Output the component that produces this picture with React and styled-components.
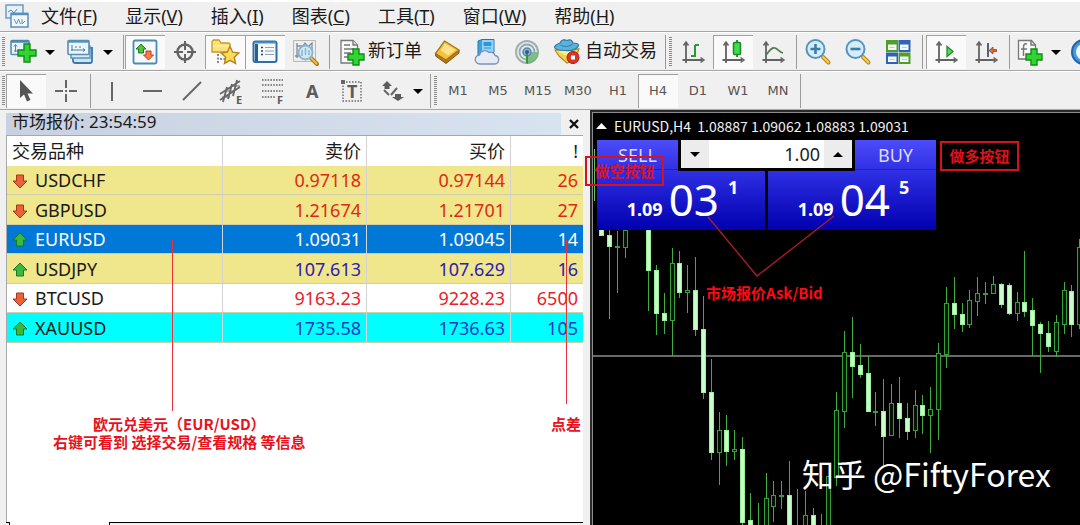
import React from "react";
import styled, { createGlobalStyle, css } from "styled-components";

const GlobalStyle = createGlobalStyle`
  * {
    box-sizing: border-box;
  }

  body {
    margin: 0;
    background-color: #f0f0f0;
    color: #1a1a1a;
    font-family: "Noto Sans", "Noto Sans CJK SC", sans-serif;
    font-size: 18px;
  }

  button, input {
    margin: 0;
    padding: 0;
    border: 0;
    background: none;
    color: inherit;
    font: inherit;
  }
`;

const Window = styled.div`
  display: flex;
  flex-direction: column;
  height: 100vh;
  overflow: hidden;
`;

const MenuBar = styled.nav`
  display: flex;
  flex: none;
  align-items: center;
  gap: 28px;
  height: 32px;
  padding: 0 0 2px 5px;
  border-top: 2px solid #fff;
  border-bottom: 1px solid #a6a6a6;
`;

const MenuLogo = styled.svg`
  flex: none;
  width: 24px;
  height: 24px;
  margin-right: -16px;
`;

const MenuItem = styled.button`
  line-height: 26px;
  white-space: nowrap;
`;

const Toolbar = styled.div`
  display: flex;
  flex: none;
  align-items: stretch;
  height: 39px;
  padding: 2px 0 1px 2px;
  overflow: hidden;
  border-top: 1px solid #fff;
  border-bottom: 1px solid #a6a6a6;
`;

const Grip = styled.div`
  flex: none;
  width: 3px;
  margin: 2px 1px 2px 0;
  background: repeating-linear-gradient(#8a8a8a 0 1px, #f0f0f0 1px 2px);
`;

const Separator = styled.div`
  flex: none;
  width: 1px;
  margin: 0 ${(p) => p.$right || 3}px 0 ${(p) => p.$left || 3}px;
  background-color: #9a9a9a;
`;

const pressed = css`
  background-color: #fafafa;
  box-shadow: inset 1px 1px 0 #a0a0a0;
`;

const ToolButton = styled.button`
  display: flex;
  flex: none;
  align-items: center;
  justify-content: center;
  gap: ${(p) => p.$gap || 2}px;
  width: ${(p) => p.$width || 40}px;
  line-height: 24px;
  white-space: nowrap;
  ${(p) => p.$pressed && pressed}

  svg {
    flex: none;
    width: 28px;
    height: 28px;
    overflow: visible;
  }
`;

const ButtonText = styled.span`
  padding-bottom: 4px;
`;

const TimeButton = styled(ToolButton)`
  color: #555;
  font-family: "DejaVu Sans", sans-serif;
  font-size: 13px;
`;

const Caret = styled.button`
  display: flex;
  flex: none;
  align-items: center;
  justify-content: center;
  width: ${(p) => p.$width || 20}px;

  &::after {
    content: "";
    border: 5px solid transparent;
    border-top-color: #000;
    border-bottom: 0;
  }
`;

const Workspace = styled.main`
  display: grid;
  flex: 1;
  grid-template-columns: 590px 1fr;
  min-height: 0;
`;

/* market watch */

const MarketPanel = styled.section`
  position: relative;
  display: flex;
  flex-direction: column;
  padding: 3px 7px 0 6px;
`;

const PanelTitle = styled.header`
  display: flex;
  flex: none;
  align-items: flex-start;
  height: 22px;
  padding-left: 6px;
  background: linear-gradient(90deg, #c8d1df, #d9e4f1);
  font-size: 17px;
  line-height: 18px;
`;

const CloseButton = styled.button`
  display: flex;
  align-items: center;
  justify-content: center;
  width: 22px;
  height: 22px;
  margin-left: auto;
  padding-left: 3px;
  background-color: #f0f0f0;
`;

const PanelBody = styled.div`
  flex: 1;
  border-top: 1px solid #a8a8a8;
  border-left: 1px solid #a8a8a8;
  background-color: #fff;
`;

const QuoteTable = styled.table`
  width: 100%;
  border-collapse: separate;
  border-spacing: 0;
  table-layout: fixed;

  th, td {
    padding: 0 5px;
    border-right: 1px solid #d4d4d4;
    text-align: right;
    font-weight: 400;
    line-height: 24px;
    white-space: nowrap;
  }

  th:first-child, td:first-child {
    text-align: left;
  }

  th:last-child, td:last-child {
    border-right: 0;
  }

  th {
    height: 30px;
  }
`;

const QuoteRow = styled.tr`
  background-color: ${(p) => p.$bg};
  color: ${(p) => p.$color};

  td {
    height: 29px;
    border-bottom: 1px solid #d0cda8;
  }

  &:nth-child(even) td {
    height: 30px;
  }

  td:first-child {
    color: ${(p) => (p.$selected ? "#fff" : "#1a1a1a")};
  }
`;

const SymbolName = styled.div`
  display: flex;
  align-items: center;
  gap: 7px;

  svg {
    width: 16px;
    height: 16px;
    margin-top: 2px;
  }
`;

const TabStrip = styled.div`
  display: flex;
  flex: none;
  height: 3px;

  &::before {
    content: "";
    width: 3px;
    border-top: 1px solid #000;
    border-right: 1px solid #000;
  }

  &::after {
    content: "";
    flex: 1;
    border-top: 1px solid #000;
    border-left: 1px solid #000;
  }
`;

const ActiveTab = styled.div`
  width: 99px;
  background-color: #fff;
`;

/* red notes over the panels */

const Note = styled.div`
  position: absolute;
  color: #e8111c;
  font-family: "Noto Sans CJK SC", sans-serif;
  font-size: 15px;
  font-weight: 700;
  line-height: 18px;
  text-align: center;
  white-space: nowrap;
`;

const PairNote = styled(Note)`
  top: 305px;
  left: 53px;
`;

const SpreadNote = styled(Note)`
  top: 305px;
  right: 9px;
`;

const PointerLine = styled.div`
  position: absolute;
  top: 130px;
  left: ${(p) => p.$left}px;
  width: 1px;
  height: ${(p) => p.$height}px;
  background-color: #e8323c;
`;

const AskBidNote = styled(Note)`
  top: 171px;
  left: 113px;
  color: #ff0a14;
`;

const BoxNote = styled(Note)`
  top: ${(p) => p.$top}px;
  left: ${(p) => p.$left}px;
  width: 79px;
  padding: 4px 0;
  border: 2px solid #d8121c;
  color: #e0101c;
  pointer-events: none;
`;

const PointerLines = styled.svg`
  position: absolute;
  top: 102px;
  left: 113px;
  width: 130px;
  height: 64px;
  pointer-events: none;
`;

/* chart */

const ChartFrame = styled.section`
  display: flex;
  border: 2px solid #2a2a2a;
  border-right: 0;
  border-bottom: 0;
`;

const ChartPane = styled.div`
  position: relative;
  flex: 1;
  border-top: 1px solid #8c8c8c;
  border-left: 1px solid #8c8c8c;
  background-color: #000;
`;

const CandleChart = styled.svg`
  position: absolute;
  inset: 0;
  width: 100%;
  height: 100%;
`;

const ChartTitle = styled.div`
  position: relative;
  display: flex;
  align-items: center;
  gap: 7px;
  height: 27px;
  padding: 0 0 2px 3px;
  color: #f2f2f2;
  font-family: "Noto Sans CJK SC", sans-serif;
  font-size: 14px;
  line-height: 20px;
  white-space: pre;
`;

const TradePanel = styled.div`
  position: relative;
  display: grid;
  grid-template-columns: 168px 168px;
  gap: 3px;
  margin-left: 4px;
  width: max-content;
`;

const TradeButton = styled.button`
  display: flex;
  flex-direction: column;
  align-items: ${(p) => (p.$side === "buy" ? "flex-end" : "flex-start")};
  height: 90px;
  background: linear-gradient(#4c4cfa, #2b2be0 40%, #0000ae);
  color: #fff;
`;

const TradeLabel = styled.span`
  width: 81px;
  height: 30px;
  border-bottom: 1px solid #2020a8;
  color: #dcdcff;
  line-height: 30px;
  text-align: center;
`;

const Price = styled.span`
  display: flex;
  align-items: baseline;
  align-self: stretch;
  justify-content: center;
  gap: 6px;
  padding-left: 3px;
  font-weight: 700;
  line-height: 58px;
`;

const BigDigits = styled.span`
  font-size: 44px;
  font-weight: 400;
`;

const Pip = styled.sup`
  align-self: flex-start;
  padding-left: 3px;
  font-size: 18px;
  line-height: 34px;
`;

const VolumeBox = styled.div`
  position: absolute;
  top: 0;
  left: 81px;
  display: flex;
  width: 177px;
  height: 31px;
  padding: 0 3px 3px;
  background-color: #000;
`;

const VolumeStep = styled.button`
  display: flex;
  align-items: center;
  justify-content: center;
  width: 28px;
  background-color: #ececec;

  &::after {
    content: "";
    border: 5px solid transparent;
    ${(p) =>
      p.$up
        ? "border-bottom-color: #000; border-top: 0;"
        : "border-top-color: #000; border-bottom: 0;"}
  }
`;

const VolumeInput = styled.input`
  flex: 1;
  min-width: 0;
  padding-right: 4px;
  background-color: #fff;
  color: #222;
  text-align: right;
`;

const Watermark = styled.div`
  position: absolute;
  right: 29px;
  bottom: 28px;
  color: #fff;
  font-family: "Noto Sans CJK SC", sans-serif;
  font-size: 32px;
  line-height: 48px;
  white-space: nowrap;
`;

/* icons */

const Plus = ({ x, y, r = 9 }) => {
  const t = Math.round(r / 3);
  return (
    <path
      d={`M${x - t} ${y - r}h${2 * t}v${r - t}h${r - t}v${2 * t}h${t - r}v${r - t}h${-2 * t}v${t - r}h${t - r}v${-2 * t}h${r - t}z`}
      fill="#2fd62f"
      stroke="#138a1b"
      strokeWidth="1.4"
    />
  );
};

const NewChartIcon = () => (
  <svg viewBox="0 0 28 28">
    <rect x="2" y="2.5" width="18" height="14" rx="1" fill="#e6f3fc" stroke="#5590b8" strokeWidth="1.6" />
    <path d="M2 3.5h18" stroke="#4b86b0" strokeWidth="2.4" />
    <path d="M6.500 7v7M5 8.500l1.500-2 1.500 2M5 13h6" stroke="#5d86a3" fill="none" />
    <Plus x={18} y={15} />
  </svg>
);

const ProfilesIcon = () => (
  <svg viewBox="0 0 28 28">
    <path d="M7 10h19v13a2 2 0 0 1-2 2H9a2 2 0 0 1-2-2z" fill="#cfe3f2" stroke="#3f78a5" strokeWidth="1.8" />
    <path d="M5 8h19v12H5z" fill="#d9ebf7" stroke="#5e93b9" strokeWidth="1.4" />
    <rect x="2" y="2.500" width="21" height="14" rx="1" fill="#eaf5fc" stroke="#5590b8" strokeWidth="1.6" />
    <path d="M2 3.500h21" stroke="#5590b8" strokeWidth="2.400" />
    <path d="M6 7v6M5 12h14M17 10.500l2 1.500-2 1.500M9 9h2M13 9h2" stroke="#4f7c9d" fill="none" />
  </svg>
);

const MarketIcon = () => (
  <svg viewBox="0 0 28 28">
    <rect x="2.500" y="2.500" width="23" height="23" rx="1.500" fill="#f3f9fd" stroke="#4a8ab3" strokeWidth="1.800" />
    <path d="M10 6l5 5h-2.500v4h-5v-4H5z" fill="#4fc23a" stroke="#1c7d1c" />
    <path d="M17.500 22l-5-5H15v-4h5v4h2.500z" fill="#f57a4d" stroke="#c53a14" />
  </svg>
);

const DataWindowIcon = () => (
  <svg viewBox="0 0 28 28" stroke="#636363" fill="none">
    <circle cx="14" cy="14" r="7.500" strokeWidth="2.400" />
    <path d="M14 3v9M14 16v9M3 14h9M16 14h9" strokeWidth="2" />
  </svg>
);

const NavigatorIcon = () => (
  <svg viewBox="0 0 28 28">
    <path d="M1 14V3.500L2.500 2H8l2 3h8l1 1v8z" fill="#f9e27a" stroke="#c79a25" strokeWidth="1.300" />
    <path d="M2 8h16" stroke="#fff3b5" />
    <path d="M7 16v10M9 21h5" stroke="#666" strokeDasharray="2 1.500" strokeWidth="1.500" />
    <path d="M19 8.500l2.700 5.700 6.100.8-4.500 4.200 1.200 6.100-5.500-3-5.500 3 1.200-6.100-4.500-4.200 6.100-.8z" fill="#fbdc58" stroke="#b5821d" strokeWidth="1.400" />
  </svg>
);

const TerminalIcon = () => (
  <svg viewBox="0 0 28 28">
    <rect x="2.500" y="3.500" width="23" height="20.500" rx="2" fill="#f6fafd" stroke="#2e6ea8" strokeWidth="2" />
    <path d="M3 4.500h22" stroke="#4d8cc2" strokeWidth="2" />
    <path d="M5.500 6v17" stroke="#285f92" strokeWidth="3" />
    <path d="M10 9.500h2M10 13h2M10 16.500h2" stroke="#23435e" strokeWidth="1.500" />
    <path d="M14 9.500h9M14 13h9M14 16.500h9" stroke="#8da4b7" />
  </svg>
);

const TesterIcon = () => (
  <svg viewBox="0 0 28 28">
    <path d="M2.500 2.500h22v21h-22z" fill="#eee" stroke="#b8b8b8" />
    <path d="M6 5v15M6 8h6l2-3 3 4 4-4v7M4 18h6" stroke="#7d8d99" fill="none" strokeWidth="1.300" />
    <path d="M20 20l6 6" stroke="#a87812" strokeWidth="4" strokeLinecap="round" />
    <path d="M20 20l5.500 5.500" stroke="#efbd3c" strokeWidth="2" strokeLinecap="round" />
    <circle cx="14.500" cy="14.500" r="7" fill="#c8e6f8" fillOpacity="0.850" stroke="#8db3cc" strokeWidth="1.800" />
    <path d="M11 12v6M14.500 10v7M18 12v5" stroke="#8ab6d1" strokeWidth="1.500" />
  </svg>
);

const NewOrderIcon = () => (
  <svg viewBox="0 0 28 28">
    <path d="M3 2.500h12l4.500 4.500v18H3z" fill="#f8f8f8" stroke="#777" strokeWidth="1.300" />
    <path d="M15 2.500V7h4.500" fill="#ddd" stroke="#777" strokeWidth="1.300" />
    <path d="M6 7h6M6 11h10M6 15h7M6 19h5" stroke="#777" strokeWidth="1.600" />
    <Plus x={18} y={19} r={8} />
  </svg>
);

const EditorIcon = () => (
  <svg viewBox="0 0 28 28">
    <path d="M2.500 15v3L13 25.500 26 15v-3L14 19z" fill="#b97a13" stroke="#8a5a0c" />
    <path d="M11.500 3L26 12 13 22 2.500 15.500z" fill="#f4c243" stroke="#a8720f" strokeWidth="1.300" />
    <path d="M12 5.500l10.500 6.500L15 17.500 8 12z" fill="#fde48a" />
    <path d="M13 22v3" stroke="#9b650d" fill="none" />
  </svg>
);

const CloudIcon = () => (
  <svg viewBox="0 0 28 28">
    <path d="M5 3l4-1.500h12V14l-3 3H5z" fill="#3da2e0" stroke="#1d78b8" />
    <path d="M9 2h11.500v12H9z" fill="#8fd3f7" />
    <path d="M11 4.500h7v3h-7zM11 10h7" fill="#2f95d6" stroke="#2f95d6" />
    <path d="M7 26a4.500 4.500 0 0 1-.5-9 5.500 5.500 0 0 1 9.500-2.500 4.500 4.500 0 0 1 6 3A4.300 4.300 0 0 1 22 26z" fill="#e4ebf6" stroke="#7d91b8" strokeWidth="1.300" />
  </svg>
);

const SignalIcon = () => (
  <svg viewBox="0 0 28 28" fill="none">
    <circle cx="14" cy="14" r="11" fill="#e6ecec" stroke="#a0b0ae" strokeWidth="2" />
    <path d="M14 14h11.500a11.500 11.500 0 0 1-11.500 11.500z" fill="#63bd5c" fillOpacity="0.800" />
    <circle cx="14" cy="14" r="7.500" stroke="#8faab0" strokeWidth="1.800" />
    <circle cx="14" cy="14" r="4" fill="#8fb7d4" stroke="#5a83ab" strokeWidth="1.500" />
    <path d="M14 14v11.500" stroke="#2d9b37" strokeWidth="2" />
    <circle cx="14" cy="14" r="2" fill="#2d5f93" />
  </svg>
);

const AutoTradeIcon = () => (
  <svg viewBox="0 0 28 28">
    <path d="M2 12l4 6 8 7 8-3 4-11z" fill="#f6d34d" stroke="#b98c1c" strokeWidth="1.200" />
    <path d="M4 13l10 5 9-5" fill="#fdeb94" />
    <path d="M1.500 9c1-3 4-3 5.500-4C8.500 1 12 1.500 14 2.500 17 1 19 2 20 5c2 0 5.500 0 5.500 2.500C24 11.500 18 13 12 12.500 6 12.500 2 12 1.500 9z" fill="#5db2dc" stroke="#2b7ba8" strokeWidth="1.200" />
    <path d="M7.500 7c3 2 9 2 12-1" stroke="#2b7ba8" fill="none" />
    <circle cx="20" cy="19.500" r="6" fill="#df3426" stroke="#a31a12" />
    <rect x="18" y="17.500" width="4" height="4" fill="#fff" />
  </svg>
);

const Axes = ({ children }) => (
  <svg viewBox="0 0 28 28" fill="none" stroke="#626262" strokeWidth="1.800">
    <path d="M7 5v20M3.500 22h20" />
    <path d="M4.500 7.500L7 4l2.500 3.500M21.500 19.500L25 22l-3.500 2.500" strokeWidth="1.500" />
    {children}
  </svg>
);

const BarChartIcon = () => (
  <Axes>
    <path d="M16 19V7M16 7h4M12 18h4" stroke="#259b35" strokeWidth="2" />
  </Axes>
);

const CandleIcon = () => (
  <Axes>
    <path d="M18 2v17" stroke="#178a28" strokeWidth="1.800" />
    <rect x="14.500" y="4.500" width="7" height="12" rx="1" fill="#3fdc4c" stroke="#178a28" strokeWidth="1.500" />
  </Axes>
);

const LineChartIcon = () => (
  <Axes>
    <path d="M7 17c4-5 6-8 9-7s4 4 8 5" stroke="#4f7c56" />
  </Axes>
);

const ZoomIcon = ({ plus }) => (
  <svg viewBox="0 0 28 28">
    <path d="M19 19l5.500 5.500" stroke="#b1821a" strokeWidth="4" strokeLinecap="round" />
    <path d="M19 19l5.500 5.500" stroke="#f6cf53" strokeWidth="2" strokeLinecap="round" />
    <circle cx="11.500" cy="11" r="9" fill="#d5edfa" stroke="#5495bf" strokeWidth="2" />
    <path d={plus ? "M6.500 11h10M11.500 6v10" : "M6.500 11h10"} stroke="#3b7da8" strokeWidth="2.600" />
  </svg>
);

const TileIcon = () => (
  <svg viewBox="0 0 28 28">
    <path d="M2 2h12v12H2zM14.500 14.500h12v11.500h-12z" fill="#4f9f27" />
    <path d="M14.500 2h12v12h-12zM2 14.500h12V26H2z" fill="#2d63b8" />
    <path d="M4 6.500h8.500v5.500H4zM16 6.500h8.500v5.500H16zM4 18.500h8.500V24H4zM16 18.500h8.500V24H16z" fill="#f4f8f8" />
    <path d="M5.500 9.500h5M18 9.500h5M5.500 21.500h5M18 21.500h5" stroke="#b9cbd2" />
  </svg>
);

const AutoScrollIcon = () => (
  <Axes>
    <path d="M15 8.500v10l6-5z" fill="#5fd25f" stroke="#228c2e" strokeWidth="1.300" />
  </Axes>
);

const ShiftIcon = () => (
  <Axes>
    <path d="M16 5v14" stroke="#496680" strokeWidth="2" />
    <path d="M17 12.500l4-3.500v2.500h3.500v2H21V16z" fill="#e06a35" stroke="#98401d" strokeWidth="0.800" />
  </Axes>
);

const IndicatorIcon = () => (
  <svg viewBox="0 0 28 28">
    <path d="M2.500 2.500h13l4 4.500v14h-17z" fill="#fafafa" stroke="#777" strokeWidth="1.300" />
    <path d="M15 2.500V7h4.500M11 6c-3-1-3.500 1-3.500 4v8M5 11h6" fill="none" stroke="#777" strokeWidth="1.500" />
    <Plus x={18} y={19} r={8} />
  </svg>
);

const ClockIcon = () => (
  <svg viewBox="0 0 28 28">
    <circle cx="14" cy="14" r="12" fill="#4a98dc" stroke="#1c66ac" strokeWidth="2" />
    <circle cx="14" cy="14" r="8" fill="#eef6fc" />
  </svg>
);

const DrawIcon = ({ children, width = 2 }) => (
  <svg viewBox="0 0 28 28" fill="none" stroke="#666" strokeWidth={width}>
    {children}
  </svg>
);

const LetterMark = styled.text`
  fill: #5c5c5c;
  stroke: none;
  font-family: "Noto Sans", sans-serif;
  font-size: ${(p) => p.$size}px;
  font-weight: 700;
`;

const CursorIcon = () => (
  <svg viewBox="0 0 28 28">
    <path d="M8 3v18l4-3.500 3 7 3.500-1.500-3-6.500H21z" fill="#555" />
  </svg>
);

const CrossIcon = () => (
  <DrawIcon>
    <path d="M14 3v8M14 17v8M3 14h8M17 14h8" />
    <path d="M13 14h2" />
  </DrawIcon>
);

const ChannelIcon = () => (
  <DrawIcon width={1.8}>
    <path d="M2 17L22 4M2 23L22 10M5 25L9 10M10 22l4-15M15 19l4-16" />
    <path d="M4 20h8M8 14h9M13 9h9" strokeWidth="1.200" />
    <LetterMark x="18" y="27" $size={11}>E</LetterMark>
  </DrawIcon>
);

const FiboIcon = () => (
  <DrawIcon width={1.600}>
    <path d="M4 3h21M4 8h21M4 14h21M4 20h13" strokeDasharray="1.600 1.200" />
    <LetterMark x="19" y="27" $size={11}>F</LetterMark>
  </DrawIcon>
);

const TextIcon = () => (
  <DrawIcon>
    <LetterMark x="8" y="21" $size={18}>A</LetterMark>
  </DrawIcon>
);

const LabelIcon = () => (
  <DrawIcon width={1.400}>
    <rect x="5" y="5" width="18" height="19" strokeDasharray="1.500 1.500" />
    <path d="M3 3h4v4H3z" fill="#666" stroke="none" />
    <LetterMark x="9" y="21" $size={18}>T</LetterMark>
  </DrawIcon>
);

const ArrowsIcon = () => (
  <DrawIcon>
    <path d="M9 4l5 5h-2.500v3h-5V9H4zM20 24l-6-4h3v-3h6v3h3z" fill="#5c5c5c" stroke="none" />
    <path d="M6 13l5 5M13 18l6-7" strokeWidth="2" />
  </DrawIcon>
);

const RowArrow = ({ up }) => (
  <svg viewBox="0 0 16 16">
    {up ? (
      <path d="M8 1l7 7h-3.500v6h-7V8H1z" fill="#3cb83c" stroke="#1a7a22" />
    ) : (
      <path d="M8 15L1 8h3.500V2h7v6H15z" fill="#ea6238" stroke="#a8371a" />
    )}
  </svg>
);

const menus = [
  ["文件", "F"],
  ["显示", "V"],
  ["插入", "I"],
  ["图表", "C"],
  ["工具", "T"],
  ["窗口", "W"],
  ["帮助", "H"],
];

const timeframes = ["M1", "M5", "M15", "M30", "H1", "H4", "D1", "W1", "MN"];

const quotes = [
  { name: "USDCHF", bid: "0.97118", ask: "0.97144", spread: "26", bg: "#f0e68c", color: "#e02a10" },
  { name: "GBPUSD", bid: "1.21674", ask: "1.21701", spread: "27", bg: "#f0e68c", color: "#e02a10" },
  { name: "EURUSD", bid: "1.09031", ask: "1.09045", spread: "14", bg: "#0078d7", color: "#fff", up: true, selected: true },
  { name: "USDJPY", bid: "107.613", ask: "107.629", spread: "16", bg: "#f0e68c", color: "#2c20b0", up: true },
  { name: "BTCUSD", bid: "9163.23", ask: "9228.23", spread: "6500", bg: "#fff", color: "#e8202c" },
  { name: "XAUUSD", bid: "1735.58", ask: "1736.63", spread: "105", bg: "#00ffff", color: "#1038c8", up: true },
];

// [slot, high, body top, body bottom, low, falling]
const candles = [
  [0, 115, 115, 122, 122, 1], [1, 117, 122, 133, 206, 1], [2, 118, 133, 134, 180, 0],
  [3, 117, 117, 134, 145, 0], [6, 117, 117, 157, 198, 1], [7, 152, 157, 200, 222, 1],
  [8, 180, 200, 207, 221, 1], [9, 135, 150, 207, 243, 0], [10, 138, 150, 179, 185, 1],
  [11, 152, 177, 179, 200, 0], [12, 144, 177, 216, 223, 1], [13, 183, 216, 279, 286, 1],
  [14, 246, 279, 339, 347, 1], [15, 299, 317, 339, 372, 0], [16, 302, 317, 338, 353, 1],
  [17, 317, 336, 338, 347, 0], [18, 324, 336, 409, 412, 1], [19, 380, 407, 420, 420, 1],
  [20, 390, 418, 420, 420, 0], [21, 360, 385, 420, 420, 0], [22, 368, 382, 393, 409, 0],
  [23, 368, 382, 383, 396, 0], [24, 348, 382, 420, 420, 1], [25, 376, 418, 420, 420, 0],
  [26, 378, 402, 420, 420, 0], [27, 395, 402, 420, 420, 1], [28, 401, 418, 420, 420, 0],
  [29, 363, 363, 420, 420, 0], [30, 279, 297, 364, 373, 0], [31, 218, 239, 298, 315, 0],
  [32, 204, 239, 253, 285, 1], [33, 231, 252, 261, 265, 1], [34, 243, 260, 298, 298, 1],
  [35, 279, 298, 299, 313, 0], [36, 266, 298, 323, 354, 1], [37, 271, 290, 322, 322, 0],
  [38, 264, 290, 305, 325, 1], [39, 290, 305, 318, 327, 1], [40, 277, 292, 317, 325, 0],
  [41, 282, 292, 302, 321, 1], [42, 274, 296, 302, 340, 0], [43, 230, 240, 296, 327, 0],
  [44, 174, 190, 241, 255, 0], [45, 164, 190, 201, 216, 1], [46, 190, 201, 211, 219, 1],
  [47, 177, 187, 211, 215, 0], [48, 164, 180, 188, 203, 0], [49, 169, 180, 181, 191, 0],
  [50, 163, 171, 180, 181, 0], [51, 170, 171, 191, 195, 1], [52, 170, 172, 200, 202, 1],
  [53, 179, 189, 200, 208, 0], [54, 138, 189, 198, 204, 1], [55, 185, 197, 212, 243, 1],
  [56, 209, 211, 220, 260, 1], [57, 208, 220, 233, 239, 1], [58, 202, 209, 238, 244, 0],
  [59, 169, 177, 211, 221, 0], [60, 172, 178, 211, 224, 1], [61, 126, 134, 211, 216, 0],
];

function Candles() {
  return (
    <CandleChart aria-label="EURUSD H4">
      <path d="M0 243H4000" stroke="#686868" strokeWidth="2" />
      <path d="M1.500 36V88" stroke="#5fc95f" />
      {candles.map(([slot, high, top, bottom, low, falling]) => {
        const x = Math.round(8 + slot * 7.84) + 0.5;
        return (
          <g key={slot} stroke="#3fae3f">
            <path d={`M${x} ${high}V${top}M${x} ${bottom}V${low}`} />
            <rect
              x={x - 2}
              y={top + 0.5}
              width="4"
              height={bottom - top}
              fill={falling ? "#c8ffc8" : "#001400"}
              stroke={falling ? "#98f098" : "#379f37"}
            />
          </g>
        );
      })}
    </CandleChart>
  );
}

function MainToolbar() {
  return (
    <Toolbar>
      <Grip />
      <ToolButton $width={34} aria-label="新图表"><NewChartIcon /></ToolButton>
      <Caret aria-label="图表列表" />
      <ToolButton aria-label="配置文件"><ProfilesIcon /></ToolButton>
      <Caret $width={16} aria-label="配置列表" />
      <Separator $left={7} $right={1} />
      <ToolButton $pressed aria-label="市场报价"><MarketIcon /></ToolButton>
      <ToolButton aria-label="数据窗口"><DataWindowIcon /></ToolButton>
      <ToolButton $pressed aria-label="导航"><NavigatorIcon /></ToolButton>
      <ToolButton $pressed aria-label="终端"><TerminalIcon /></ToolButton>
      <ToolButton aria-label="策略测试"><TesterIcon /></ToolButton>
      <Separator $left={4} />
      <ToolButton $width={94}><NewOrderIcon /><ButtonText>新订单</ButtonText></ToolButton>
      <ToolButton aria-label="编辑器"><EditorIcon /></ToolButton>
      <ToolButton aria-label="云"><CloudIcon /></ToolButton>
      <ToolButton aria-label="信号"><SignalIcon /></ToolButton>
      <ToolButton $width={116} $gap={4}><AutoTradeIcon /><ButtonText>自动交易</ButtonText></ToolButton>
      <Separator $left={2} />
      <Grip />
      <ToolButton aria-label="柱状图"><BarChartIcon /></ToolButton>
      <ToolButton $pressed aria-label="阴阳烛"><CandleIcon /></ToolButton>
      <ToolButton aria-label="折线图"><LineChartIcon /></ToolButton>
      <Separator $left={3} $right={1} />
      <ToolButton aria-label="放大"><ZoomIcon plus /></ToolButton>
      <ToolButton aria-label="缩小"><ZoomIcon /></ToolButton>
      <ToolButton aria-label="平铺"><TileIcon /></ToolButton>
      <Separator $left={4} $right={3} />
      <ToolButton $pressed aria-label="自动滚动"><AutoScrollIcon /></ToolButton>
      <ToolButton aria-label="图表平移"><ShiftIcon /></ToolButton>
      <Separator $left={3} $right={2} />
      <ToolButton $width={36} aria-label="技术指标"><IndicatorIcon /></ToolButton>
      <Caret $width={16} aria-label="指标列表" />
      <ToolButton aria-label="时间周期"><ClockIcon /></ToolButton>
    </Toolbar>
  );
}

function DrawToolbar() {
  return (
    <Toolbar>
      <Grip />
      <ToolButton $pressed aria-label="光标"><CursorIcon /></ToolButton>
      <ToolButton aria-label="十字"><CrossIcon /></ToolButton>
      <Separator $left={4} $right={1} />
      <ToolButton aria-label="垂直线"><DrawIcon><path d="M14 5v19" /></DrawIcon></ToolButton>
      <ToolButton aria-label="水平线"><DrawIcon><path d="M5 14h19" /></DrawIcon></ToolButton>
      <ToolButton aria-label="趋势线"><DrawIcon><path d="M5 23L23 5" /></DrawIcon></ToolButton>
      <ToolButton aria-label="通道"><ChannelIcon /></ToolButton>
      <ToolButton aria-label="斐波那契"><FiboIcon /></ToolButton>
      <ToolButton aria-label="文本"><TextIcon /></ToolButton>
      <ToolButton aria-label="文本标签"><LabelIcon /></ToolButton>
      <ToolButton aria-label="箭头"><ArrowsIcon /></ToolButton>
      <Caret $width={12} aria-label="箭头列表" />
      <Separator $left={6} $right={3} />
      <Grip />
      {timeframes.map((tf) => (
        <TimeButton key={tf} $pressed={tf === "H4"}>{tf}</TimeButton>
      ))}
      <Separator $left={2} />
    </Toolbar>
  );
}

function MarketWatch() {
  return (
    <MarketPanel>
      <PanelTitle>
        市场报价: 23:54:59
        <CloseButton aria-label="关闭">
          <svg width="10" height="10" viewBox="0 0 10 10">
            <path d="M1 1l8 8M9 1L1 9" stroke="#111" strokeWidth="2.400" />
          </svg>
        </CloseButton>
      </PanelTitle>
      <PanelBody>
        <QuoteTable>
          <colgroup>
            <col />
            <col width="144" />
            <col width="144" />
            <col width="72" />
          </colgroup>
          <thead>
            <tr>
              <th>交易品种</th>
              <th>卖价</th>
              <th>买价</th>
              <th>!</th>
            </tr>
          </thead>
          <tbody>
            {quotes.map((q) => (
              <QuoteRow key={q.name} $bg={q.bg} $color={q.color} $selected={q.selected}>
                <td>
                  <SymbolName>
                    <RowArrow up={q.up} />
                    {q.name}
                  </SymbolName>
                </td>
                <td>{q.bid}</td>
                <td>{q.ask}</td>
                <td>{q.spread}</td>
              </QuoteRow>
            ))}
          </tbody>
        </QuoteTable>
      </PanelBody>
      <TabStrip>
        <ActiveTab />
      </TabStrip>
      <PointerLine $left={172} $height={171} />
      <PointerLine $left={566} $height={164} />
      <PairNote>
        欧元兑美元（EUR/USD）
        <br />
        右键可看到 选择交易/查看规格 等信息
      </PairNote>
      <SpreadNote>点差</SpreadNote>
    </MarketPanel>
  );
}

function ChartWindow() {
  return (
    <ChartFrame>
      <ChartPane>
        <Candles />
        <ChartTitle>
          <svg width="11" height="6" viewBox="0 0 11 6">
            <path d="M0 6L5.500 0 11 6z" fill="#fff" />
          </svg>
          EURUSD,H4  1.08887 1.09062 1.08883 1.09031
        </ChartTitle>
        <TradePanel>
          <TradeButton $side="sell">
            <TradeLabel>SELL</TradeLabel>
            <Price>1.09<BigDigits>03</BigDigits><Pip>1</Pip></Price>
          </TradeButton>
          <TradeButton $side="buy">
            <TradeLabel>BUY</TradeLabel>
            <Price>1.09<BigDigits>04</BigDigits><Pip>5</Pip></Price>
          </TradeButton>
          <VolumeBox>
            <VolumeStep aria-label="减少" />
            <VolumeInput aria-label="手数" defaultValue="1.00" />
            <VolumeStep $up aria-label="增加" />
          </VolumeBox>
        </TradePanel>
        <PointerLines viewBox="0 0 130 64">
          <path d="M2 2L51 61L128 1" fill="none" stroke="#b01c2c" strokeWidth="1.300" />
        </PointerLines>
        <BoxNote $top={43} $left={-8}>做空按钮</BoxNote>
        <BoxNote $top={28} $left={347}>做多按钮</BoxNote>
        <AskBidNote>市场报价Ask/Bid</AskBidNote>
        <Watermark>知乎 @FiftyForex</Watermark>
      </ChartPane>
    </ChartFrame>
  );
}

export default function App() {
  return (
    <Window>
      <GlobalStyle />
      <MenuBar>
        <MenuLogo viewBox="0 0 24 24">
          <path d="M1 1h17v13H1z" fill="#e4f0fa" stroke="#6e9cc4" strokeWidth="1.500" />
          <path d="M3 8l3-2 3 3 3-4" stroke="#5b8cb8" fill="none" />
          <path d="M6 9.500h17V23H6z" fill="#f2f8fd" stroke="#5a8ebd" strokeWidth="1.500" />
          <path d="M6 10h17" stroke="#5a8ebd" strokeWidth="2.500" />
          <path d="M9 15l2.500 5 2-5 2 5M17 15v5l3-3" stroke="#6794bd" fill="none" />
        </MenuLogo>
        {menus.map(([name, key]) => (
          <MenuItem key={key}>
            {name}(<u>{key}</u>)
          </MenuItem>
        ))}
      </MenuBar>
      <MainToolbar />
      <DrawToolbar />
      <Workspace>
        <MarketWatch />
        <ChartWindow />
      </Workspace>
    </Window>
  );
}
